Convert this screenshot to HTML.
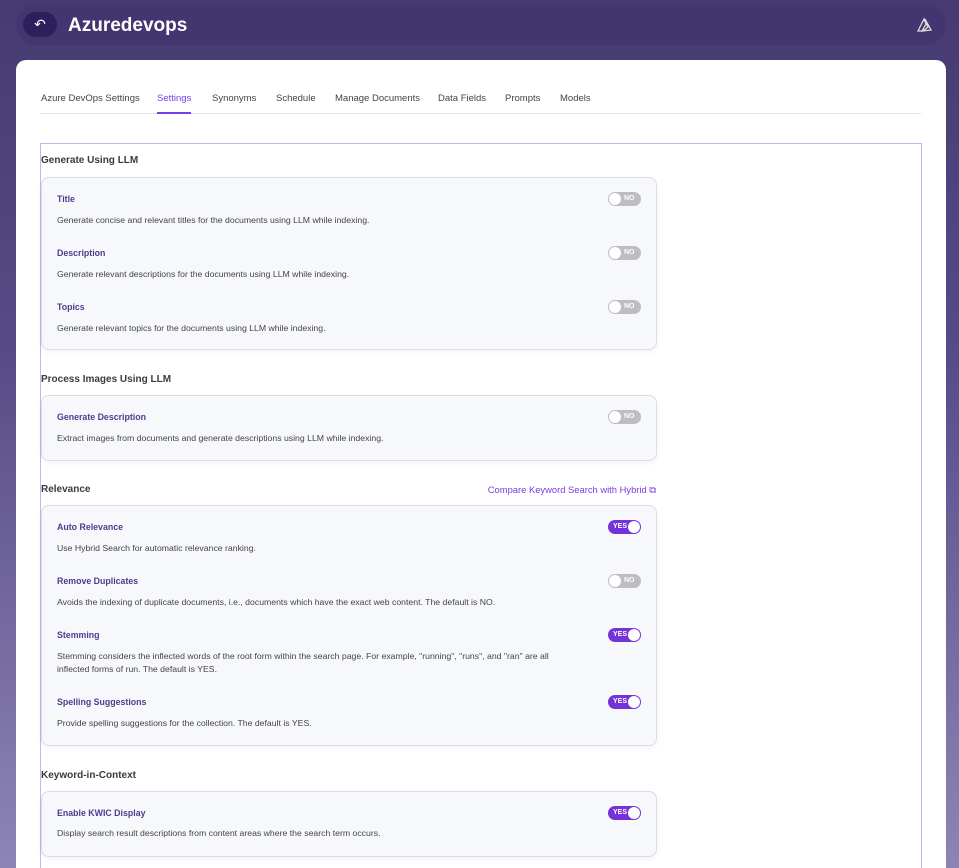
<!DOCTYPE html>
<html><head><meta charset="utf-8"><style>
*{margin:0;padding:0;box-sizing:border-box}
html{width:959px;height:868px;overflow:hidden}
body{width:959px;height:868px;overflow:hidden;font-family:"Liberation Sans",sans-serif;background:linear-gradient(180deg,#463a72 0%,#574b87 40%,#8d84b6 100%);position:relative}
.hdr{position:absolute;left:16px;top:5px;width:930px;height:40px;border-radius:20px;background:#433670}
.back{position:absolute;left:7px;top:7px;width:34px;height:25px;border-radius:13px;background:#2c1f5c;color:#fff;font-size:14px;text-align:center;line-height:25px}
.ttl{position:absolute;left:52px;top:10px;color:#fff;font-size:19px;font-weight:bold}
.panel{position:absolute;left:16px;top:60px;width:930px;height:808px;background:#fff;border-radius:10px 10px 0 0;overflow:hidden}
.tabs{position:absolute;left:24px;top:33px;width:881px;height:21px;border-bottom:1px solid #e3e3e8;font-size:9.5px;color:#444}
.tabs span{position:absolute;top:0}
.tabs .act{color:#7a3ce6;border-bottom:2px solid #7a3ce6;height:21px}
.outer{position:absolute;left:24px;top:83px;width:882px;height:760px;border:1px solid #cbb2f4;border-bottom:none}
.sec{position:absolute;left:25px;font-size:10px;font-weight:bold;color:#3a3a44}
.card{position:absolute;left:25px;width:616px;background:#f7f8fc;border:1px solid #dcdce4;border-radius:8px;box-shadow:0 2px 6px rgba(0,0,0,.05)}
.it{position:absolute;left:15px;font-size:8.8px;font-weight:bold;color:#4d3c8c}
.ds{position:absolute;left:15px;font-size:8.7px;color:#444;line-height:13px}
.tg{position:absolute;left:566px;width:33px;height:14px;border-radius:7px;font-size:7px;font-weight:bold;color:#fff;line-height:14px}
.no{background:#bdbdc2}.no::before{content:"";position:absolute;left:1px;top:1px;width:12px;height:12px;border-radius:50%;background:#fff}.no span{position:absolute;left:16px}
.yes{background:#7433d8}.yes::before{content:"";position:absolute;right:1px;top:1px;width:12px;height:12px;border-radius:50%;background:#fff}.yes span{position:absolute;left:5px}
.link{position:absolute;right:290px;top:424px;font-size:9.4px;color:#7a3ce6}
</style></head><body>
<div class="hdr"><div class="back">&#x21B6;</div><div class="ttl">Azuredevops</div>
<svg style="position:absolute;left:900px;top:10px" width="20" height="20" viewBox="0 0 20 20" fill="none" stroke="#ddd" stroke-width="1.3"><path d="M2 16 L8 4 L10 9 L6 16 Z M9 4 L15 15 L7 16 L12 12 L10 8"/></svg></div>
<div class="panel">
<div class="tabs">
<span style="left:1px">Azure DevOps Settings</span>
<span class="act" style="left:117px">Settings</span>
<span style="left:172px">Synonyms</span>
<span style="left:236px">Schedule</span>
<span style="left:295px">Manage Documents</span>
<span style="left:398px">Data Fields</span>
<span style="left:465px">Prompts</span>
<span style="left:520px">Models</span>
</div>
<div class="outer"></div>
<div class="sec" style="top:95px">Generate Using LLM</div>
<div class="card" style="top:117px;height:173px">
<div class="it" style="top:16px">Title</div><div class="tg no" style="top:14px"><span>NO</span></div>
<div class="ds" style="top:36px">Generate concise and relevant titles for the documents using LLM while indexing.</div>
<div class="it" style="top:70px">Description</div><div class="tg no" style="top:68px"><span>NO</span></div>
<div class="ds" style="top:90px">Generate relevant descriptions for the documents using LLM while indexing.</div>
<div class="it" style="top:124px">Topics</div><div class="tg no" style="top:122px"><span>NO</span></div>
<div class="ds" style="top:144px">Generate relevant topics for the documents using LLM while indexing.</div>
</div>
<div class="sec" style="top:314px">Process Images Using LLM</div>
<div class="card" style="top:335px;height:66px">
<div class="it" style="top:16px">Generate Description</div><div class="tg no" style="top:14px"><span>NO</span></div>
<div class="ds" style="top:36px">Extract images from documents and generate descriptions using LLM while indexing.</div>
</div>
<div class="sec" style="top:424px">Relevance</div>
<div class="link">Compare Keyword Search with Hybrid &#x29C9;</div>
<div class="card" style="top:445px;height:241px">
<div class="it" style="top:16px">Auto Relevance</div><div class="tg yes" style="top:14px"><span>YES</span></div>
<div class="ds" style="top:36px">Use Hybrid Search for automatic relevance ranking.</div>
<div class="it" style="top:70px">Remove Duplicates</div><div class="tg no" style="top:68px"><span>NO</span></div>
<div class="ds" style="top:90px">Avoids the indexing of duplicate documents, i.e., documents which have the exact web content. The default is NO.</div>
<div class="it" style="top:124px">Stemming</div><div class="tg yes" style="top:122px"><span>YES</span></div>
<div class="ds" style="top:144px">Stemming considers the inflected words of the root form within the search page. For example, "running", "runs", and "ran" are all<br>inflected forms of run. The default is YES.</div>
<div class="it" style="top:191px">Spelling Suggestions</div><div class="tg yes" style="top:189px"><span>YES</span></div>
<div class="ds" style="top:211px">Provide spelling suggestions for the collection. The default is YES.</div>
</div>
<div class="sec" style="top:710px">Keyword-in-Context</div>
<div class="card" style="top:731px;height:66px">
<div class="it" style="top:16px">Enable KWIC Display</div><div class="tg yes" style="top:14px"><span>YES</span></div>
<div class="ds" style="top:35px">Display search result descriptions from content areas where the search term occurs.</div>
</div>
</div>
</body></html>
